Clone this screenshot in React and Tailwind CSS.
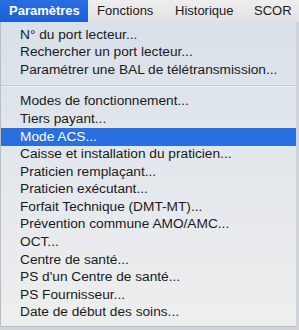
import React from 'react';

const groups = [
  ['N° du port lecteur...', 'Rechercher un port lecteur...', 'Paramétrer une BAL de télétransmission...'],
  [
    'Modes de fonctionnement...',
    'Tiers payant...',
    'Mode ACS...',
    'Caisse et installation du praticien...',
    'Praticien remplaçant...',
    'Praticien exécutant...',
    'Forfait Technique (DMT-MT)...',
    'Prévention commune AMO/AMC...',
    'OCT...',
    'Centre de santé...',
    "PS d'un Centre de santé...",
    'PS Fournisseur...',
    'Date de début des soins...',
  ],
];

export default function App() {
  return (
    <div className="relative w-[299px] h-[330px] overflow-hidden bg-[#cfd3d8] text-[#1a1a1a]" style={{ fontFamily: '"Liberation Sans", Arial, sans-serif' }}>
      {/* menu bar */}
      <div className="flex h-[22px] items-center bg-gradient-to-b from-[#eeeeee] to-[#e2e2e2] text-[13px]">
        <div className="flex h-full w-[88px] items-center bg-gradient-to-b from-[#2a6de0] to-[#1b5fd6] pl-[9px] font-bold text-white">Paramètres</div>
        <div className="w-[78px] pl-[9px]">Fonctions</div>
        <div className="w-[79px] pl-[9px]">Historique</div>
        <div className="pl-[9px]">SCOR</div>
      </div>

      {/* dropdown */}
      <div className="absolute left-0 top-[22px] w-[296px] h-[305px] border-l border-b border-[#b9bec4] bg-gradient-to-b from-[#d8e0e9] via-[#e4e8ed] to-[#eeeeee] pt-[4px] text-[13.7px]">
        {groups.map((items, gi) => (
          <div key={gi}>
            {gi > 0 && (
              <div className="my-[6px] h-[2px] border-t border-[#c2c9d1] bg-[#eef1f4]" />
            )}
            {items.map((label) => {
              const active = label === 'Mode ACS...';
              return (
                <div
                  key={label}
                  className={
                    active
                      ? 'flex h-[17.6px] items-center pl-[19px] bg-[#2a6fe0] text-white'
                      : 'flex h-[17.6px] items-center pl-[19px]'
                  }
                >
                  {label}
                </div>
              );
            })}
          </div>
        ))}
      </div>
    </div>
  );
}
